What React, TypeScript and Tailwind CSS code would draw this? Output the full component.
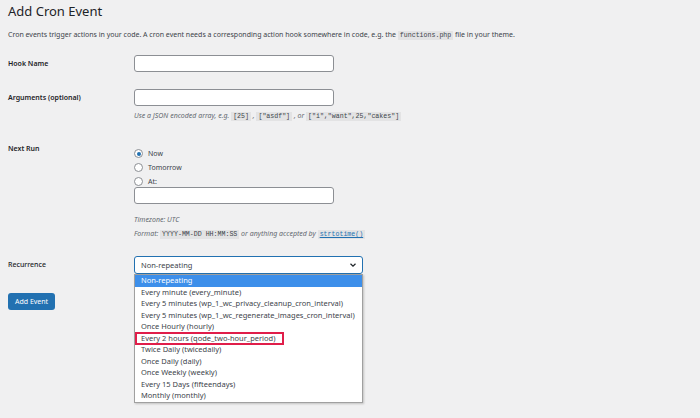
import React from "react";

const font = { fontFamily: '"Noto Sans", "Open Sans", sans-serif' };

function Code({ children }: { children: React.ReactNode }) {
  return (
    <code className="bg-[#e3e3e4] px-[2px] py-[1px] font-['Liberation_Mono',monospace] text-[6.6px] not-italic text-[#3c434a]">
      {children}
    </code>
  );
}

function Radio({ label, checked }: { label: string; checked?: boolean }) {
  return (
    <div className="flex h-[14px] items-center gap-[5px]">
      <span className="flex h-[9px] w-[9px] items-center justify-center rounded-full border border-[#8c8f94] bg-white">
        {checked && <span className="h-[4px] w-[4px] rounded-full bg-[#2271b1]" />}
      </span>
      <span>{label}</span>
    </div>
  );
}

const options = [
  "Every minute (every_minute)",
  "Every 5 minutes (wp_1_wc_privacy_cleanup_cron_interval)",
  "Every 5 minutes (wp_1_wc_regenerate_images_cron_interval)",
  "Once Hourly (hourly)",
  "Every 2 hours (qode_two-hour_period)",
  "Twice Daily (twicedaily)",
  "Once Daily (daily)",
  "Once Weekly (weekly)",
  "Every 15 Days (fifteendays)",
  "Monthly (monthly)",
];

export default function App() {
  return (
    <div className="h-[418px] w-[700px] overflow-hidden bg-[#f0f0f1] px-2 text-[7px] text-[#3c434a]" style={font}>
      <h1 className="pt-[2px] text-[13px] leading-[18px] font-normal text-[#1d2327]">Add Cron Event</h1>
      <p className="mt-[10px] leading-[10px]">
        Cron events trigger actions in your code. A cron event needs a corresponding action hook somewhere in code, e.g. the{" "}
        <Code>functions.php</Code> file in your theme.
      </p>

      <div className="mt-[14px] flex">
        <div className="w-[126px] pt-[4px] font-semibold text-[#1d2327]">Hook Name</div>
        <div className="h-[17px] w-[200px] rounded-[3px] border border-[#8c8f94] bg-white" />
      </div>

      <div className="mt-[17px] flex">
        <div className="w-[126px] pt-[4px] font-semibold text-[#1d2327]">Arguments (optional)</div>
        <div>
          <div className="h-[17px] w-[200px] rounded-[3px] border border-[#8c8f94] bg-white" />
          <p className="mt-[5px] whitespace-nowrap italic text-[#646970]">
            Use a JSON encoded array, e.g. <Code>[25]</Code> , <Code>["asdf"]</Code> , or{" "}
            <Code>["i","want",25,"cakes"]</Code>
          </p>
        </div>
      </div>

      <div className="mt-[22px] flex">
        <div className="w-[126px] font-semibold text-[#1d2327]">Next Run</div>
        <div className="pt-[3px]">
          <Radio label="Now" checked />
          <Radio label="Tomorrow" />
          <Radio label="At:" />
          <div className="-mt-[2px] h-[17px] w-[200px] rounded-[3px] border border-[#8c8f94] bg-white" />
          <p className="mt-[11px] italic text-[#646970]">Timezone: UTC</p>
          <p className="mt-[4px] whitespace-nowrap italic text-[#646970]">
            Format: <Code>YYYY-MM-DD HH:MM:SS</Code> or anything accepted by{" "}
            <Code>
              <span className="text-[#2271b1] underline">strtotime()</span>
            </Code>
          </p>
        </div>
      </div>

      <div className="mt-[16px] flex">
        <div className="w-[126px] pt-[4px] font-medium text-[#1d2327]">Recurrence</div>
        <div className="relative w-[229px]">
          <div className="flex h-[18px] items-center justify-between rounded-[3px] border border-[#2271b1] bg-white pl-[6px] pr-[5px] text-[7.5px]">
            <span>Non-repeating</span>
            <svg width="8" height="8" viewBox="0 0 8 8" fill="none" stroke="#1d2327" strokeWidth="1.2">
              <path d="M1.5 2.8 L4 5.2 L6.5 2.8" />
            </svg>
          </div>
          <div className="absolute left-0 top-[18px] w-[229px] border border-[#a0a0a0] bg-white text-[7.5px] shadow-[1px_1px_2px_rgba(0,0,0,0.2)]">
            <div className="flex h-[11.5px] items-center bg-[#3d8fea] pl-[6px] text-white">Non-repeating</div>
            {options.map((o) => (
              <div key={o} className="relative flex h-[11.5px] items-center whitespace-nowrap pl-[6px] text-[#3c434a]">
                {o}
                {o.startsWith("Every 2 hours") && (
                  <span className="absolute left-0 top-[-1px] h-[13px] w-[149px] border-2 border-[#e01e4a]" />
                )}
              </div>
            ))}
          </div>
        </div>
      </div>

      <button className="mt-[19px] h-[17px] rounded-[3px] bg-[#2271b1] px-[7px] text-[7px] text-white">Add Event</button>
    </div>
  );
}
